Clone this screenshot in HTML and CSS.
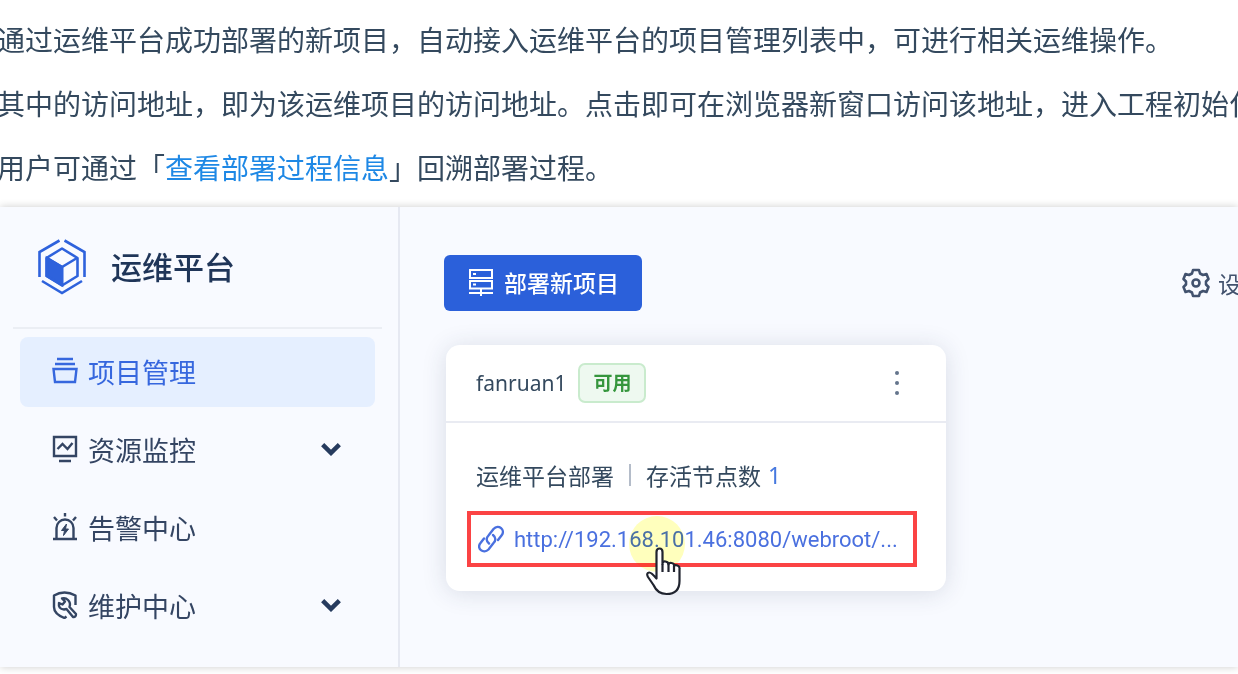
FILE: index.html
```html
<!DOCTYPE html>
<html lang="zh-CN">
<head>
    <meta charset="UTF-8">
    <meta name="viewport" content="width=device-width, initial-scale=1.0">
    <title>运维平台 - 项目管理</title>
    <link rel="stylesheet" href="styles.css">
</head>
<body>
    <article class="doc">
        <div class="doc-text">
            <p>通过运维平台成功部署的新项目，自动接入运维平台的项目管理列表中，可进行相关运维操作。</p>
            <p>其中的访问地址，即为该运维项目的访问地址。点击即可在浏览器新窗口访问该地址，进入工程初始化</p>
            <p>用户可通过「<a href="#deploy-info">查看部署过程信息</a>」回溯部署过程。</p>
        </div>

        <div class="platform">
            <aside class="sidebar">
                <div class="brand">
                    <svg class="brand-logo" viewBox="0 0 50 56" fill="none" stroke="#2e62dc" stroke-width="2.600">
                        <path d="M22.500 1.500L2.500 13v25M27.500 1.500L47.500 13v25M5 42l20 12 20-12"/>
                        <path d="M25 9.500L40.500 19v18L25 46.500 9.500 37V19z" stroke-linejoin="round"/>
                        <path d="M10 19l15 9 15-9M25 28v18" />
                        <path d="M10 19l15 9v18l-15-9z" fill="#2e62dc"/>
                    </svg>
                    <span class="brand-name">运维平台</span>
                </div>
                <nav class="menu">
                    <a class="menu-item active" href="#projects">
                        <svg class="icon" viewBox="0 0 26 28" fill="none" stroke="currentColor" stroke-width="2.400">
                            <path d="M5 2h16M3 7h20M1.500 12h23l-1.500 13H3z"/>
                        </svg>
                        <span>项目管理</span>
                    </a>
                    <a class="menu-item" href="#monitor">
                        <svg class="icon" viewBox="0 0 26 28" fill="none" stroke="currentColor" stroke-width="2.400">
                            <path d="M2 2h22v19H2zM7 26h12M5.500 14l5-5 5 5 5-6"/>
                        </svg>
                        <span>资源监控</span>
                        <svg class="arrow" viewBox="0 0 18 12" fill="none" stroke="currentColor" stroke-width="4"><path d="M1.500 2L9 9.500 16.500 2"/></svg>
                    </a>
                    <a class="menu-item" href="#alarm">
                        <svg class="icon" viewBox="0 0 26 28" fill="none" stroke="currentColor" stroke-width="2.400">
                            <path d="M1 26h24M4.500 26V15a8.500 8.500 0 0 1 17 0v11M13 0v3.500M2 4l3 3.500M24 4l-3 3.500"/>
                            <path d="M14.500 11l-5 6.500h3l-1 5 5-6.500h-3z" fill="currentColor" stroke-width="1"/>
                        </svg>
                        <span>告警中心</span>
                    </a>
                    <a class="menu-item" href="#maintain">
                        <svg class="icon" viewBox="0 0 26 28" fill="none" stroke="currentColor" stroke-width="2.400" stroke-linejoin="round">
                            <path d="M23.500 14V4.500Q18 1.500 12.500 1.500T2 4.500V16q0 7 10.500 11l2-1.500"/>
                            <path d="M10 7.500l3 3-2.500 3-3.500-1.500q-1 6 5 6.500l2.500-.5 6.500 8q3 .5 3-3l-6.500-7q1.500-4-1.500-7-2.500-2.500-6-1.500z"/>
                        </svg>
                        <span>维护中心</span>
                        <svg class="arrow" viewBox="0 0 18 12" fill="none" stroke="currentColor" stroke-width="4"><path d="M1.500 2L9 9.500 16.500 2"/></svg>
                    </a>
                </nav>
            </aside>

            <main class="content">
                <div class="toolbar">
                    <button class="deploy-btn" type="button">
                        <svg class="icon" viewBox="0 0 26 28" fill="none" stroke="currentColor" stroke-width="2">
                            <path d="M2 2h22v8H2zM2 13h22v7.500H2zM13 20.500V28M1 25h24M5 6h3M5 16.500h3"/>
                        </svg>
                        <span>部署新项目</span>
                    </button>
                    <button class="setting-btn" type="button">
                        <svg class="gear" viewBox="0 0 28 30" fill="none" stroke="currentColor" stroke-width="2.600" stroke-linejoin="round">
                            <path d="M11 2h6l1 3.500 3 1.500 3.500-1 2 5-2.500 2.500v3l2.500 2.500-2 5-3.500-1-3 1.500-1 3.500h-6l-1-3.500L7 23l-3.500 1-2-5L4 16.500v-3L1.500 11l2-5L7 7l3-1.500z"/>
                            <circle cx="14" cy="15" r="3.500"/>
                        </svg>
                        <span>设置</span>
                    </button>
                </div>

                <section class="card">
                    <header class="card-header">
                        <span class="project-name">fanruan1</span>
                        <span class="status">可用</span>
                        <button class="more-btn" type="button" aria-label="更多">
                            <svg viewBox="0 0 6 26" fill="currentColor"><circle cx="3" cy="3" r="2"/><circle cx="3" cy="13" r="2"/><circle cx="3" cy="23" r="2"/></svg>
                        </button>
                    </header>
                    <div class="card-body">
                        <div class="info">
                            <span>运维平台部署</span>
                            <span class="divider"></span>
                            <span>存活节点数</span>
                            <a href="#nodes">1</a>
                        </div>
                        <a class="address" href="#webroot">
                            <svg class="link-icon" viewBox="0 0 26 28" fill="none" stroke="currentColor" stroke-width="2.400" stroke-linecap="round">
                                <path d="M11 18.500c-3-2.500-3-5.500-.5-8l5-6.500c5-5.500 12.500 1 8 6.500L20 15"/>
                                <path d="M15 10c3 2.500 3 5.500.5 8l-5 6.500c-5 5-12.500-1-8-6.500L6 13.500"/>
                            </svg>
                            <span>http://192.168.101.46:8080/webroot/...</span>
                            <!-- 鼠标点击提示 -->
                            <span class="click-spot"></span>
                            <svg class="cursor" viewBox="0 0 36 50" fill="#fff" stroke="#20242f" stroke-width="2.200" stroke-linejoin="round">
                                <path d="M10.500 29V5q0-3.500 3-3.500t3 3.500v12q0-3 3-2.500t3 3q0-2 3-1.500t2.500 3q1-1.500 3.500-.5t2 3.500V34q0 13-13 13-9 0-13-9l-5.500-8q-2-4 1-4.500 2-.5 7.500 6z"/>
                                <path d="M16.500 17v8M22.500 17v8M28 19v6" fill="none"/>
                            </svg>
                        </a>
                    </div>
                </section>
            </main>
        </div>
    </article>
</body>
</html>
```
FILE: styles.css
```css
* {
    box-sizing: border-box;
}

body {
    margin: 0;
    min-height: 100vh;
    background: #fff;
    color: #34495e;
    font-family: "Noto Sans", "Noto Sans CJK SC", sans-serif;
    overflow-x: hidden;
}

a {
    text-decoration: none;
}

button {
    border: 0;
    padding: 0;
    background: none;
    font: inherit;
    color: inherit;
}

/* 说明文字 */
.doc {
    padding-top: 7px;
}

.doc-text {
    margin-left: -3px;
    font-family: "Noto Sans CJK SC", sans-serif;
    font-size: 28px;
    line-height: 48px;
    white-space: nowrap;
}

.doc-text p {
    margin: 0;
    padding: 8px 0;
}

.doc-text a {
    color: #1e88e5;
}

/* 平台界面 */
.platform {
    display: flex;
    margin-top: 8px;
    background: #f8faff;
    box-shadow: 0 0 8px rgba(0, 0, 0, 0.2);
    overflow: hidden;
}

.sidebar {
    flex: 0 0 400px;
    border-right: 2px solid #e6e9f2;
    padding-bottom: 26px;
}

.brand {
    display: flex;
    align-items: center;
    gap: 24px;
    height: 122px;
    margin: 0 16px 0 13px;
    padding-left: 24px;
    border-bottom: 2px solid #ebeef4;
}

.brand-logo {
    width: 50px;
    height: 56px;
}

.brand-name {
    padding-bottom: 4px;
    color: #1f3558;
    font-size: 31px;
    font-weight: 500;
}

.menu {
    display: flex;
    flex-direction: column;
    gap: 8px;
    padding: 8px 23px 0 20px;
}

.menu-item {
    display: flex;
    align-items: center;
    gap: 10px;
    height: 70px;
    padding: 0 34px 2px 32px;
    border-radius: 8px;
    color: #344563;
    font-size: 27px;
}

.menu-item.active {
    background: #e5efff;
    color: #3667de;
}

.icon {
    flex: none;
    width: 26px;
    height: 28px;
}

.arrow {
    width: 20px;
    height: 14px;
    margin-left: auto;
    color: #263b5e;
}

.content {
    flex: 1;
    min-width: 0;
    padding: 48px 0 0 44px;
    font-size: 23px;
}

.toolbar {
    display: flex;
    justify-content: space-between;
    margin-right: -26px;
}

.deploy-btn {
    display: flex;
    align-items: center;
    gap: 10px;
    height: 56px;
    padding: 0 23px 2px 24px;
    border-radius: 6px;
    background: #2b60da;
    color: #fff;
    font-weight: 500;
}

.setting-btn {
    display: flex;
    align-items: center;
    gap: 8px;
    color: #42526e;
}

.gear {
    width: 28px;
    height: 30px;
}

/* 项目卡片 */
.card {
    width: 500px;
    margin: 34px 0 0 2px;
    border-radius: 14px;
    background: #fff;
    box-shadow: 0 2px 24px rgba(40, 55, 85, 0.15);
}

.card-header {
    display: flex;
    align-items: center;
    gap: 12px;
    height: 78px;
    padding: 0 46px 0 30px;
    border-bottom: 2px solid #e9ebf2;
}

.project-name {
    font-size: 21px;
}

.status {
    height: 40px;
    padding: 0 13px;
    border: 2px solid #c9ebcd;
    border-radius: 7px;
    background: #eef9f0;
    color: #35963d;
    font-size: 19px;
    font-weight: 700;
    line-height: 36px;
}

.more-btn {
    display: flex;
    margin-left: auto;
    color: #64748c;
}

.more-btn svg {
    width: 6px;
    height: 26px;
}

.card-body {
    padding: 34px 29px 24px 21px;
}

.info {
    display: flex;
    align-items: center;
    height: 36px;
    margin-bottom: 18px;
    padding-left: 9px;
}

.info a {
    margin-left: 7px;
    color: #4678df;
}

.divider {
    width: 2px;
    height: 22px;
    margin: 0 15px;
    background: #b4bcc9;
}

.address {
    position: relative;
    display: flex;
    align-items: center;
    gap: 10px;
    height: 56px;
    padding-left: 7px;
    border: 4px solid #fb4344;
    color: #4a70df;
    font-family: Roboto, "Noto Sans", sans-serif;
    font-size: 22px;
    white-space: nowrap;
}

.link-icon {
    flex: none;
    width: 26px;
    height: 28px;
}

.click-spot {
    position: absolute;
    left: 158px;
    top: 1px;
    width: 56px;
    height: 56px;
    border-radius: 50%;
    background: #ffffbd;
    mix-blend-mode: multiply;
}

.cursor {
    position: absolute;
    left: 175px;
    top: 32px;
    width: 36px;
    height: 50px;
}
```
